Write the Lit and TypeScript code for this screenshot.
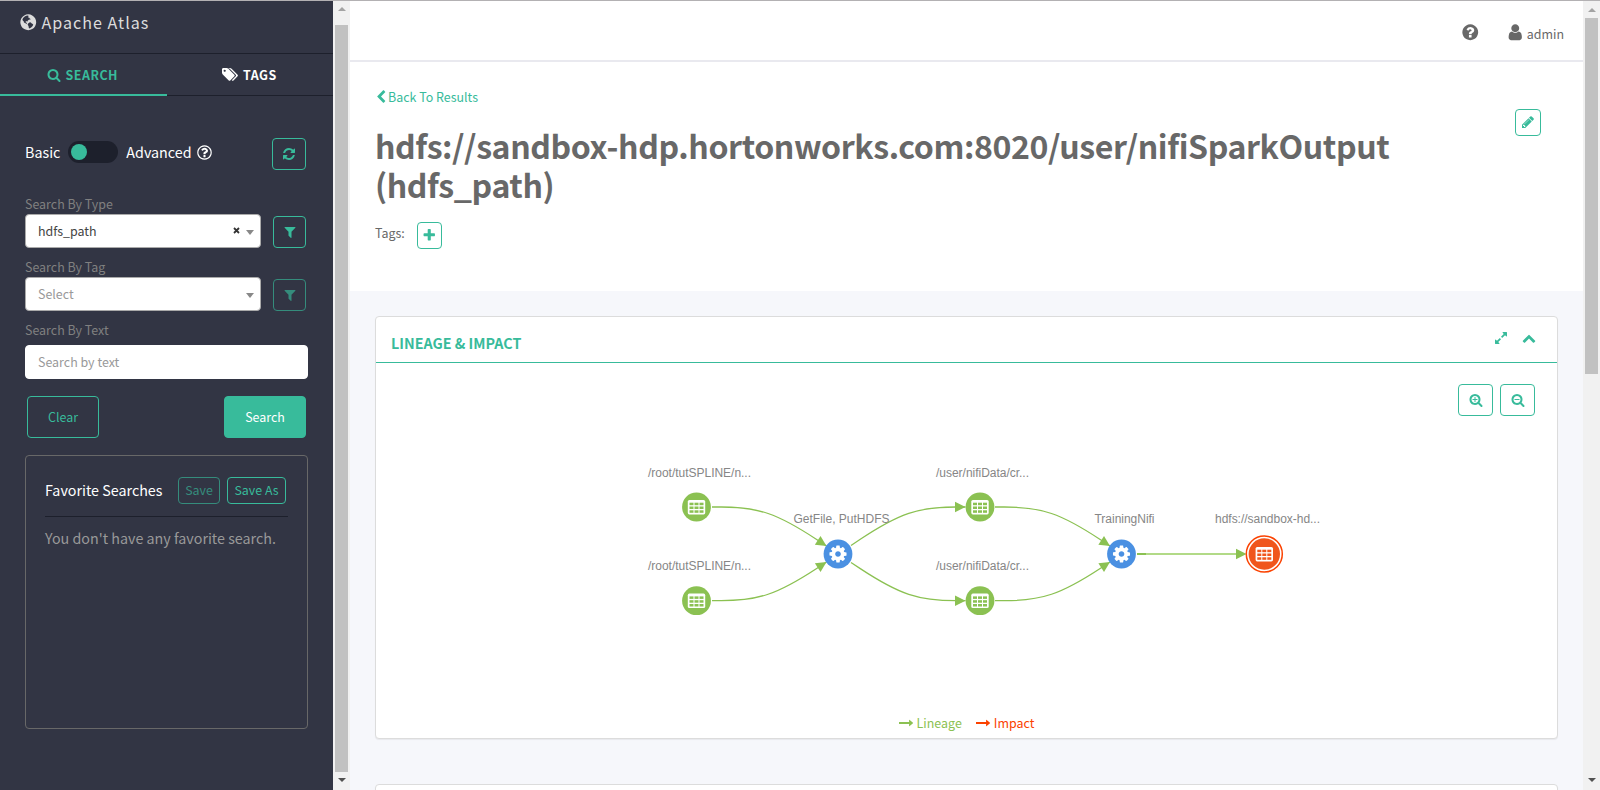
import { LitElement, html, svg, css } from "lit";
import { customElement, property } from "lit/decorators.js";

const ZOOM_RING =
  "M1216 832q0-185-131.5-316.5t-316.5-131.5-316.5 131.5-131.5 316.5 131.5 316.5 316.5 131.5 316.5-131.5 131.5-316.5zm512 832q0 52-38 90t-90 38q-54 0-90-38l-343-342q-179 124-399 124-143 0-273.5-55.5t-225-150-150-225-55.5-273.5 55.5-273.5 150-225 225-150 273.5-55.5 273.5 55.5 225 150 150 225 55.5 273.5q0 220-124 399l343 343q37 37 37 90z";

const ICONS: Record<string, string> = {
  search: ZOOM_RING,
  "search-plus":
    ZOOM_RING +
    "M1088 800v64q0 13-9.5 22.5t-22.5 9.5h-224v224q0 13-9.5 22.5t-22.5 9.5h-64q-13 0-22.5-9.5t-9.5-22.5v-224h-224q-13 0-22.5-9.5t-9.5-22.5v-64q0-13 9.5-22.5t22.5-9.5h224v-224q0-13 9.5-22.5t22.5-9.5h64q13 0 22.5 9.5t9.5 22.5v224h224q13 0 22.5 9.5t9.5 22.5z",
  "search-minus":
    ZOOM_RING +
    "M1088 800v64q0 13-9.5 22.5t-22.5 9.5h-576q-13 0-22.5-9.5t-9.5-22.5v-64q0-13 9.5-22.5t22.5-9.5h576q13 0 22.5 9.5t9.5 22.5z",
  refresh:
    "M1639 1056q0 5-1 7-64 268-268 434.5t-478 166.5q-146 0-282.5-55t-243.5-157l-129 129q-19 19-45 19t-45-19-19-45v-448q0-26 19-45t45-19h448q26 0 45 19t19 45-19 45l-137 137q71 66 161 102t187 36q134 0 250-65t186-179q11-17 53-117 8-23 30-23h192q13 0 22.5 9.5t9.5 22.5zm25-800v448q0 26-19 45t-45 19h-448q-26 0-45-19t-19-45 19-45l138-138q-148-137-349-137-134 0-250 65t-186 179q-11 17-53 117-8 23-30 23h-199q-13 0-22.5-9.5t-9.5-22.5v-7q65-268 270-434.5t480-166.5q146 0 284 55.5t245 156.5l130-129q19-19 45-19t45 19 19 45z",
  filter:
    "M1595 295q17 41-14 70l-493 493v742q0 42-39 59-13 5-25 5-27 0-45-19l-256-256q-19-19-19-45v-486l-493-493q-31-29-14-70 17-39 59-39h1280q42 0 59 39z",
  plus:
    "M1600 736v192q0 40-28 68t-68 28h-416v416q0 40-28 68t-68 28h-192q-40 0-68-28t-28-68v-416h-416q-40 0-68-28t-28-68v-192q0-40 28-68t68-28h416v-416q0-40 28-68t68-28h192q40 0 68 28t28 68v416h416q40 0 68 28t28 68z",
  pencil:
    "M491 1536l91-91-235-235-91 91v107h128v128h107zm523-928q0-22-22-22-10 0-17 7l-542 542q-7 7-7 17 0 22 22 22 10 0 17-7l542-542q7-7 7-17zm-54-192l416 416-832 832h-416v-416zm683 96q0 53-37 90l-166 166-416-416 166-165q36-38 90-38 53 0 91 38l235 234q37 39 37 91z",
  "question-circle":
    "M1024 1376v-192q0-14-9-23t-23-9h-192q-14 0-23 9t-9 23v192q0 14 9 23t23 9h192q14 0 23-9t9-23zm256-672q0-88-55.5-163t-138.5-116-170-41q-243 0-371 213-15 24 8 42l132 100q7 6 19 6 16 0 25-12 53-68 86-92 34-24 86-24 48 0 85.5 26t37.5 59q0 38-20 61t-68 45q-63 28-115.5 86.5t-52.5 125.5v36q0 14 9 23t23 9h192q14 0 23-9t9-23q0-19 21.5-49.5t54.5-49.5q32-18 49-28.5t46-35 44.5-48 28-60.5 12.5-81zm384 192q0 209-103 385.5t-279.5 279.5-385.5 103-385.5-103-279.5-279.5-103-385.5 103-385.5 279.5-279.5 385.5-103 385.5 103 279.5 279.5 103 385.5z",
  "question-circle-o":
    "M1008 1200v160q0 14-9 23t-23 9h-160q-14 0-23-9t-9-23v-160q0-14 9-23t23-9h160q14 0 23 9t9 23zm256-496q0 50-15 90t-45.5 69-52 44-59.5 36q-32 18-46.5 28t-26 24-11.5 29v32q0 14-9 23t-23 9h-160q-14 0-23-9t-9-23v-68q0-35 10.5-64.5t24-47.5 39-35.5 41-25.5 44.5-21q53-25 75-43t22-49q0-42-43.5-71.5t-95.5-29.5q-56 0-95 27-29 20-80 83-9 12-25 12-11 0-19-6l-108-82q-10-7-12-20t5-23q122-192 349-192 129 0 238.5 89.5t109.5 214.5zm-368-448q-130 0-248.5 51t-204 136.5-136.5 204-51 248.5 51 248.5 136.5 204 204 136.5 248.5 51 248.5-51 204-136.5 136.5-204 51-248.5-51-248.5-136.5-204-204-136.5-248.5-51zm768 640q0 209-103 385.5t-279.5 279.5-385.5 103-385.5-103-279.5-279.5-103-385.5 103-385.5 279.5-279.5 385.5-103 385.5 103 279.5 279.5 103 385.5z",
  user:
    "M1536 1399q0 109-62.5 187t-150.5 78h-854q-88 0-150.5-78t-62.5-187q0-85 8.5-160.5t31.5-152 58.5-131 94-89 134.5-34.5q131 128 313 128t313-128q76 0 134.5 34.5t94 89 58.5 131 31.5 152 8.5 160.5zm-256-887q0 159-112.5 271.5t-271.5 112.5-271.5-112.5-112.5-271.5 112.5-271.5 271.5-112.5 271.5 112.5 112.5 271.5z",
  tags:
    "M448 448q0-53-37.5-90.5t-90.5-37.5-90.5 37.5-37.5 90.5 37.5 90.5 90.5 37.5 90.5-37.5 37.5-90.5zm1067 576q0 53-37 90l-491 492q-39 37-91 37-53 0-90-37l-715-716q-38-37-64.5-101t-26.5-117v-416q0-52 38-90t90-38h416q53 0 117 26.5t102 64.5l715 714q37 39 37 91zm384 0q0 53-37 90l-491 492q-39 37-91 37-36 0-59-14t-53-45l470-470q37-37 37-90 0-52-37-91l-715-714q-38-38-102-64.5t-117-26.5h224q53 0 117 26.5t102 64.5l715 714q37 39 37 91z",
  "chevron-left":
    "M1427 301l-531 531 531 531q19 19 19 45t-19 45l-166 166q-19 19-45 19t-45-19l-742-742q-19-19-19-45t19-45l742-742q19-19 45-19t45 19l166 166q19 19 19 45t-19 45z",
  "chevron-up":
    "M1683 1331l-166 165q-19 19-45 19t-45-19l-531-531-531 531q-19 19-45 19t-45-19l-166-165q-19-19-19-45.5t19-45.5l742-741q19-19 45-19t45 19l742 741q19 19 19 45.5t-19 45.5z",
  expand:
    "M883 1056q0 13-10 23l-332 332 144 144q19 19 19 45t-19 45-45 19h-448q-26 0-45-19t-19-45v-448q0-26 19-45t45-19 45 19l144 144 332-332q10-10 23-10t23 10l114 114q10 10 10 23zm781-864v448q0 26-19 45t-45 19-45-19l-144-144-332 332q-10 10-23 10t-23-10l-114-114q-10-10-10-23t10-23l332-332-144-144q-19-19-19-45t19-45 45-19h448q26 0 45 19t19 45z",
  globe:
    "M896 128q209 0 385.5 103t279.5 279.5 103 385.5-103 385.5-279.5 279.5-385.5 103-385.5-103-279.5-279.5-103-385.5 103-385.5 279.5-279.5 385.5-103zM560 340L400 480L330 640L380 760L460 800L470 900L560 960L640 1000L700 1060L760 1040L740 950L640 900L660 800L760 790L800 850L840 760L920 690L1000 640L1080 660L1120 580L1010 500L960 400L900 470L860 380L960 300L840 250L700 270zM1060 900L980 940L860 1040L840 1150L920 1260L950 1420L1000 1500L1180 1400L1320 1250L1380 1120L1290 1040L1200 1000L1150 920z",
  arrow: "M0 780h1290v-250q0-30 28-40t50 10l424 370q20 20 0 46l-424 374q-22 20-50 10t-28-40v-250H0z",
};

const GEAR =
  "M1152 896q0-106-75-181t-181-75-181 75-75 181 75 181 181 75 181-75 75-181zm512-109v222q0 12-8 23t-20 13l-185 28q-19 54-39 91 35 50 107 138 10 12 10 25t-9 23q-27 37-99 108t-94 71q-12 0-26-9l-138-108q-44 23-91 38-16 136-29 186-7 28-36 28h-222q-14 0-24.5-8.5t-11.5-21.5l-28-184q-49-16-90-37l-141 107q-10 9-25 9-14 0-25-11-126-114-165-168-7-10-7-23 0-12 8-23 15-21 51-66.5t54-70.5q-27-50-41-99l-183-27q-13-2-21-12.5t-8-23.5v-222q0-12 8-23t19-13l186-28q14-46 39-92-40-57-107-138-10-12-10-24 0-10 9-23 26-36 98.5-107.5t94.5-71.5q13 0 26 10l138 107q44-23 91-38 16-136 29-186 7-28 36-28h222q14 0 24.5 8.5t11.5 21.5l28 184q49 16 90 37l142-107q9-9 24-9 13 0 25 10 129 119 165 170 7 8 7 22 0 12-8 23-15 21-51 66.5t-54 70.5q26 50 41 98l183 28q13 2 21 12.5t8 23.5z";

@customElement("fa-icon")
class FaIcon extends LitElement {
  @property() name = "";
  @property({ type: Number }) size = 14;
  static styles = css`
    :host { display: inline-flex; flex: none; }
    svg { display: block; fill: currentColor; overflow: visible; }
  `;
  render() {
    const w = this.name === "tags" ? 1920 : 1792;
    return html`<svg width=${(this.size * w) / 1792} height=${this.size} viewBox="0 0 ${w} 1792">
      <path fill-rule=${this.name === "globe" ? "evenodd" : "nonzero"} d=${ICONS[this.name]}></path>
    </svg>`;
  }
}

@customElement("scroll-bar")
class ScrollBar extends LitElement {
  @property({ type: Number }) gap = 0;
  @property({ type: Number }) thumb = 100;
  static styles = css`
    :host { display: flex; flex-direction: column; align-items: center; width: 17px; flex: none; background: #f1f1f1; }
    .btn { height: 17px; width: 17px; display: flex; align-items: center; justify-content: center; }
    .track { flex: 1; width: 13px; }
    .thumb { background: #c1c1c1; }
    .down { padding-bottom: 2px; }
    svg { display: block; }
  `;
  render() {
    return html`
      <div class="btn"><svg width="8" height="4"><path d="M0 4L4 0L8 4z" fill="#a3a3a3" /></svg></div>
      <div class="track">
        <div class="thumb" style="margin-top:${this.gap}px;height:${this.thumb}px"></div>
      </div>
      <div class="btn down"><svg width="8" height="4"><path d="M0 0L4 4L8 0z" fill="#505050" /></svg></div>
    `;
  }
}

type Pt = [number, number];
interface GraphNode { x: number; y: number; kind: "data" | "process" | "current"; label: string; lx: number; ly: number; len: number }

const NODES: GraphNode[] = [
  { x: 696.5, y: 507, kind: "data", label: "/root/tutSPLINE/n...", lx: 648, ly: 477, len: 103 },
  { x: 696.5, y: 600.7, kind: "data", label: "/root/tutSPLINE/n...", lx: 648, ly: 570, len: 103 },
  { x: 838, y: 554, kind: "process", label: "GetFile, PutHDFS", lx: 793.5, ly: 523, len: 96 },
  { x: 980, y: 507, kind: "data", label: "/user/nifiData/cr...", lx: 936, ly: 477, len: 93 },
  { x: 980, y: 600.7, kind: "data", label: "/user/nifiData/cr...", lx: 936, ly: 570, len: 93 },
  { x: 1121.5, y: 554, kind: "process", label: "TrainingNifi", lx: 1094.5, ly: 523, len: 60 },
  { x: 1264.3, y: 554, kind: "current", label: "hdfs://sandbox-hd...", lx: 1215, ly: 523, len: 105 },
];

const EDGES: [Pt, Pt, Pt, number][] = [
  [[712, 507], [767.5, 507], [826.5, 546], 33],
  [[712, 600.7], [767.5, 600.7], [826.5, 562], -33],
  [[851, 545.5], [909, 507], [965.5, 507], 0],
  [[851, 562.5], [909, 600.7], [965.5, 600.7], 0],
  [[995, 507], [1051, 507], [1110, 546], 33],
  [[995, 600.7], [1051, 600.7], [1110, 562], -33],
];

const mix = (p: Pt, q: Pt, a: number, b: number): string =>
  `${(p[0] * a + q[0] * b) / (a + b)} ${(p[1] * a + q[1] * b) / (a + b)}`;

const basis = (a: Pt, b: Pt, c: Pt): string =>
  `M${a[0]} ${a[1]}L${mix(a, b, 5, 1)}C${mix(a, b, 2, 1)} ${mix(a, b, 1, 2)} ` +
  `${(a[0] + 4 * b[0] + c[0]) / 6} ${(a[1] + 4 * b[1] + c[1]) / 6}` +
  `C${mix(b, c, 2, 1)} ${mix(b, c, 1, 2)} ${mix(b, c, 1, 5)}L${c[0]} ${c[1]}`;

@customElement("lineage-graph")
class LineageGraph extends LitElement {
  static styles = css`
    :host { display: block; }
    svg { display: block; }
    .edge { fill: none; stroke: #8bc152; stroke-width: 1.3; }
    .head { fill: #8bc152; }
    text { font: 12px "Liberation Sans", Arial, sans-serif; fill: #868686; }
  `;
  private grid(fill: string) {
    return svg`<rect x="-8.7" y="-7.1" width="17.4" height="14.5" rx="1.6" fill="#fff" />
      ${[-7, -2, 3].map((x) => [-4.3, -0.5, 3.3].map((y) => svg`<rect x=${x} y=${y} width="4" height="2.5" fill=${fill} />`))}`;
  }
  private node(n: GraphNode) {
    const body =
      n.kind === "process"
        ? svg`<circle r="14.4" fill="#4a90e2" /><path fill="#fff" transform="scale(.0111) translate(-896 -896)" d=${GEAR} />`
        : n.kind === "data"
        ? svg`<circle r="14.4" fill="#8bc152" />${this.grid("#8bc152")}`
        : svg`<circle r="18" fill="#fff" stroke="#fb4200" stroke-width="1.5" /><circle r="15.7" fill="#f0561d" />${this.grid("#f0561d")}`;
    return svg`<g transform="translate(${n.x} ${n.y})">${body}</g>
      <text x=${n.lx} y=${n.ly} textLength=${n.len}>${n.label}</text>`;
  }
  render() {
    return html`<svg width="1181" height="340" viewBox="376 363 1181 340">
      ${EDGES.map(([a, b, c, rot]) => svg`<path class="edge" d=${basis(a, b, c)} />
        <path class="head" transform="translate(${c[0]} ${c[1]}) rotate(${rot})" d="M0 0L-10.5 -5.2V5.2z" />`)}
      <path d="M1137 554H1238" stroke="#b2da87" stroke-width="2" />
      <path d="M1137 554H1146" stroke="#8bc152" stroke-width="2" />
      <path class="head" d="M1246.5 554L1236 548.8V559.2z" />
      ${NODES.map((n) => this.node(n))}
    </svg>`;
  }
}

@customElement("app-root")
class AppRoot extends LitElement {
  static styles = css`
    :host { display: block; }
    * { box-sizing: border-box; }
    .page {
      display: flex; width: 1600px; height: 790px; overflow: hidden; border-top: 1px solid #b3b1b3;
      font: 12.45px/20px "Noto Sans CJK SC", "Noto Sans", sans-serif; color: #686868; background: #f6f7fb;
    }
    .row { display: flex; }
    .between { justify-content: space-between; }
    .sidebar { width: 333px; flex: none; background: #323544; display: flex; flex-direction: column; }
    .brand {
      height: 53px; border-bottom: 1px solid #1d202c; padding: 0 0 10px 19px; display: flex; align-items: center; gap: 4px;
      font-size: 16.1px; letter-spacing: 1px; color: #dcdcdc;
    }
    .brand fa-icon { margin-top: 1px; }
    .tab { flex: 1; height: 42px; display: flex; align-items: center; justify-content: center; gap: 4.5px; padding-right: 1px;
      font-weight: 700; letter-spacing: .5px; color: #fff; border-bottom: 1px solid #1d202c; }
    .tab.active { flex: none; width: 167px; padding: 1px 2px 0 0; color: #38bb9b; border-bottom: 2px solid #38bb9b; }
    .form { padding: 42px 25px 0; display: flex; flex-direction: column; }
    .mode { display: flex; align-items: center; height: 32px; font-size: 14.3px; color: #fff; }
    .mode > span { position: relative; top: -2px; }
    .mode > fa-icon { margin: 0 0 4px 4px; }
    .toggle { width: 50px; height: 22px; border-radius: 11px; background: #1d202c; margin: 0 8px 4px 8px; padding: 3px; }
    .knob { width: 16px; height: 16px; border-radius: 50%; background: #38bb9b; }
    .btn { border: 1px solid #38bb9b; color: #38bb9b; border-radius: 4px; display: flex; align-items: center; justify-content: center; flex: none; }
    .dim { opacity: .65; }
    .refresh { width: 34px; height: 32px; margin: 0 2px 0 auto; }
    .filter { width: 33px; height: 32px; margin: 2px 2px 0 0; }
    .label { height: 21px; line-height: 23px; color: #808080; }
    .first { margin-top: 23px; }
    .next { margin-top: 8px; }
    .select, .input { height: 34px; background: #fff; border: 1px solid #aaa; border-radius: 4px; display: flex; align-items: center; padding: 0 6px 0 12px; color: #444; }
    .select { width: 236px; }
    .select .x { margin: -2px 6px 0 auto; }
    .hint { color: #999; }
    .caret { width: 0; height: 0; border: 4px solid transparent; border-top: 5px solid #888; border-bottom: 0; margin-top: 2px; }
    .select.hint .caret { margin-left: auto; }
    .input { border-color: #fff; margin-top: 5px; }
    .actions { display: flex; justify-content: space-between; margin-top: 17px; padding: 0 2px; }
    .clear { width: 72px; height: 42px; }
    .go { width: 82px; height: 42px; background: #38bb9b; color: #fff; font-weight: 400; }
    .fav { height: 274px; margin-top: 17px; border: 1px solid #686868; border-radius: 4px; padding: 21px 19px 0; font-size: 14.3px; color: #999; }
    .favhead { display: flex; align-items: center; height: 40px; padding: 0 2px 13px 0; border-bottom: 1px solid #1d202c; color: #fff; gap: 7px; }
    .favhead b { font-weight: 400; margin-right: auto; }
    .sm { height: 27px; font-size: 12.4px; }
    .save { width: 42px; } .saveas { width: 59px; }
    .favtext { margin-top: 11px; white-space: nowrap; }
    .main { flex: 1; min-width: 0; }
    .top { height: 61px; background: #fff; border-bottom: 2px solid #e9e9ef; display: flex; justify-content: flex-end; align-items: center; padding: 7px 19px 0 0; }
    .top .user { margin: -3px 2px 0 27px; }
    .top .help { margin: -3px 0 0; }
    .detail { height: 229px; background: #fff; padding: 25px 42px 0 25px; display: flex; }
    .info { flex: 1; min-width: 0; }
    .back { color: #38bb9b; display: flex; align-items: center; }
    .back fa-icon { margin-left: -1px; }
    h1 { margin: 19px 0 0; font-size: 32.1px; line-height: 39px; font-weight: 700; letter-spacing: -.41px; color: #686868; }
    .tagline { display: flex; margin-top: 18px; align-items: flex-start; gap: 12px; }
    .tagline span { line-height: 22px; }
    .add { width: 25px; height: 27px; }
    .edit { width: 26px; height: 27px; margin-top: 22px; border-radius: 4px; }
    .edit fa-icon { margin-bottom: 2px; }
    .card { width: 1183px; margin: 25px 0 0 25px; background: #fff; border: 1px solid #dcdcdc; border-radius: 4px; box-shadow: 0 1px 1px rgba(0,0,0,.06); position: relative; }
    .cardhead { height: 46px; border-bottom: 1px solid #38bb9b; display: flex; align-items: center; padding: 0 21px 0 15px; color: #38bb9b; }
    .cardhead h2 { margin: 7px auto 0 0; font-size: 14.3px; font-weight: 700; line-height: 20px; }
    .cardhead fa-icon { margin: 0 0 4px 14px; }
    .tools { position: absolute; right: 22px; top: 67px; display: flex; gap: 7px; }
    .zoom { width: 35px; height: 32px; }
    .legend { height: 35px; padding-top: 5px; display: flex; justify-content: center; align-items: center; gap: 14px; }
    .legend span { display: flex; align-items: center; gap: 4px; }
    .lin { color: #8bc152; } .imp { color: #fb4200; }
    .below { margin-top: 45px; height: 60px; }
  `;
  render() {
    return html`<div class="page">
      <aside class="sidebar">
        <div class="brand"><fa-icon name="globe" size="18.5"></fa-icon>Apache Atlas</div>
        <div class="row">
          <div class="tab active"><fa-icon name="search" size="14"></fa-icon>SEARCH</div>
          <div class="tab"><fa-icon name="tags" size="15"></fa-icon>TAGS</div>
        </div>
        <div class="form">
          <div class="mode">
            <span>Basic</span>
            <div class="toggle"><div class="knob"></div></div>
            <span>Advanced</span>
            <fa-icon name="question-circle-o" size="17"></fa-icon>
            <div class="btn refresh"><fa-icon name="refresh" size="14"></fa-icon></div>
          </div>
          <div class="label first">Search By Type</div>
          <div class="row between">
            <div class="select">hdfs_path
              <svg class="x" width="7" height="7"><path d="M1 1L6 6M6 1L1 6" stroke="#333" stroke-width="1.8" /></svg>
              <i class="caret"></i></div>
            <div class="btn filter"><fa-icon name="filter" size="14"></fa-icon></div>
          </div>
          <div class="label next">Search By Tag</div>
          <div class="row between">
            <div class="select hint">Select<i class="caret"></i></div>
            <div class="btn filter dim"><fa-icon name="filter" size="14"></fa-icon></div>
          </div>
          <div class="label next">Search By Text</div>
          <div class="input hint">Search by text</div>
          <div class="actions">
            <div class="btn clear">Clear</div>
            <div class="btn go">Search</div>
          </div>
          <div class="fav">
            <div class="favhead"><b>Favorite Searches</b>
              <div class="btn sm save dim">Save</div>
              <div class="btn sm saveas">Save As</div>
            </div>
            <div class="favtext">You don't have any favorite search.</div>
          </div>
        </div>
      </aside>
      <scroll-bar gap="8" thumb="747"></scroll-bar>
      <main class="main">
        <header class="top">
          <fa-icon class="help" name="question-circle" size="18.5"></fa-icon>
          <fa-icon class="user" name="user" size="18.5"></fa-icon>admin
        </header>
        <section class="detail">
          <div class="info">
            <div class="back"><fa-icon name="chevron-left" size="14"></fa-icon>Back To Results</div>
            <h1>hdfs://sandbox-hdp.hortonworks.com:8020/user/nifiSparkOutput (hdfs_path)</h1>
            <div class="tagline"><span>Tags:</span><div class="btn add"><fa-icon name="plus" size="14.5"></fa-icon></div></div>
          </div>
          <div class="btn edit"><fa-icon name="pencil" size="14"></fa-icon></div>
        </section>
        <section class="card">
          <div class="cardhead">
            <h2>LINEAGE &amp; IMPACT</h2>
            <fa-icon name="expand" size="14"></fa-icon>
            <fa-icon name="chevron-up" size="14"></fa-icon>
          </div>
          <lineage-graph></lineage-graph>
          <div class="tools">
            <div class="btn zoom"><fa-icon name="search-plus" size="14"></fa-icon></div>
            <div class="btn zoom"><fa-icon name="search-minus" size="14"></fa-icon></div>
          </div>
          <div class="legend">
            <span class="lin"><fa-icon name="arrow" size="14"></fa-icon>Lineage</span>
            <span class="imp"><fa-icon name="arrow" size="14"></fa-icon>Impact</span>
          </div>
        </section>
        <section class="card below"></section>
      </main>
      <scroll-bar gap="0" thumb="356"></scroll-bar>
    </div>`;
  }
}
